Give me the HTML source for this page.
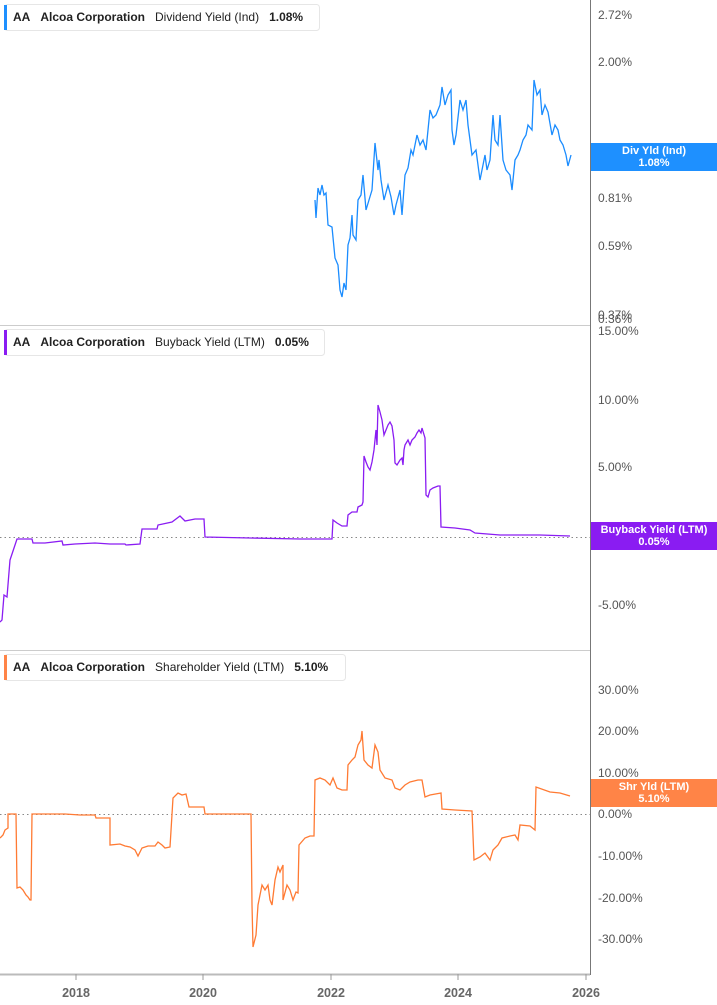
<!DOCTYPE html>
<html><head><meta charset="utf-8"><style>
html,body{margin:0;padding:0;background:#fff;}
svg{display:block;font-family:"Liberation Sans",Arial,sans-serif;}
.t{font-size:12px;fill:#555;}
.leg{font-size:12px;fill:#222;}
.b{font-weight:bold;}
</style></head><body>
<svg width="717" height="1005" viewBox="0 0 717 1005" xmlns="http://www.w3.org/2000/svg">
<rect width="717" height="1005" fill="#fff"/>
<line x1="0" y1="325.5" x2="590" y2="325.5" stroke="#ccc"/>
<line x1="0" y1="650.5" x2="590" y2="650.5" stroke="#ccc"/>
<line x1="590.5" y1="0" x2="590.5" y2="975" stroke="#777"/>
<line x1="0" y1="974.5" x2="590" y2="974.5" stroke="#bbb" stroke-width="2"/>
<g stroke="#999"><line x1="76" y1="974" x2="76" y2="980"/><line x1="203" y1="974" x2="203" y2="980"/><line x1="331" y1="974" x2="331" y2="980"/><line x1="458" y1="974" x2="458" y2="980"/><line x1="586" y1="974" x2="586" y2="980"/></g>
<g font-size="12.5" font-weight="bold" fill="#666" text-anchor="middle">
<text x="76" y="997">2018</text><text x="203" y="997">2020</text><text x="331" y="997">2022</text><text x="458" y="997">2024</text><text x="586" y="997">2026</text></g>

<line x1="0" y1="537.5" x2="590" y2="537.5" stroke="#888" stroke-dasharray="1.5,3"/>
<line x1="0" y1="814.5" x2="590" y2="814.5" stroke="#888" stroke-dasharray="1.5,3"/>

<g class="t">
<text x="598" y="19">2.72%</text><text x="598" y="66">2.00%</text>
<text x="598" y="170" opacity="0.5">1.00%</text>
<text x="598" y="202">0.81%</text><text x="598" y="250">0.59%</text>
<text x="598" y="319">0.37%</text><text x="598" y="323">0.36%</text>
<text x="598" y="335">15.00%</text><text x="598" y="404">10.00%</text><text x="598" y="471">5.00%</text>
<text x="598" y="541" opacity="0.5">0.00%</text>
<text x="598" y="609">-5.00%</text>
<text x="598" y="694">30.00%</text><text x="598" y="735">20.00%</text><text x="598" y="777">10.00%</text>
<text x="598" y="818">0.00%</text><text x="598" y="860">-10.00%</text><text x="598" y="902">-20.00%</text><text x="598" y="943">-30.00%</text>
</g>

<polyline fill="none" stroke="#1a8cff" stroke-width="1.3" points="315,200 316,218 318,188 320,195 322,185 324,195 326,193 328,225 332,227 335,258 338,265 340,290 342,297 344,283 346,290 348,245 350,238 352,215 353,235 356,240 358,200 361,195 363,175 366,210 369,200 372,190 375,143 378,170 379,160 381,180 384,200 388,185 391,197 394,215 396,205 400,190 402,215 405,175 408,168 411,150 413,155 417,135 420,145 423,140 426,150 430,110 433,118 436,115 440,105 442,87 445,105 448,95 451,90 452,130 454,145 456,135 460,100 463,110 466,100 468,125 472,155 476,150 480,180 483,165 485,155 487,170 490,160 493,115 495,140 498,145 500,115 503,160 506,170 510,175 512,190 515,160 518,155 520,150 523,140 526,135 528,125 532,130 534,80 537,95 540,90 542,115 545,105 548,112 552,135 555,125 558,130 560,140 563,145 566,155 568,166 571,155"/>

<polyline fill="none" stroke="#8a1cf2" stroke-width="1.3" points="0,622 2,620 4,595 7,597 10,560 17,539 32,539 33,543 45,543 62,541 63,545 75,544 95,543 110,544 125,544 126,545 140,544 142,529 157,529 158,525 172,522 180,516 185,521 195,519 204,519 205,537 250,538 300,539 320,539 332,539 333,520 337,523 342,526 347,526 348,515 352,512 357,512 358,507 362,505 363,502 364,456 366,462 368,467 370,470 372,462 374,450 376,430 377,445 378,405 380,412 382,420 384,435 386,430 388,425 390,422 392,426 394,440 395,463 397,465 400,460 402,458 403,465 404,450 405,445 408,440 410,445 412,440 415,437 417,433 419,430 421,433 422,428 425,438 426,495 428,497 430,490 433,488 438,486 440,486 441,527 455,528 470,530 475,533 500,535 540,535 570,536"/>

<polyline fill="none" stroke="#ff7a33" stroke-width="1.3" points="0,838 3,835 5,830 8,828 8,814 16,814 17,888 20,887 23,890 26,895 28,897 30,900 31,900 32,814 65,814 80,815 95,815 96,818 110,818 110,845 120,844 125,846 130,847 135,850 138,856 142,848 148,846 155,846 158,842 162,845 165,848 170,847 173,798 178,793 182,795 186,794 189,807 204,807 205,814 230,814 251,814 252,905 253,947 256,935 258,905 262,885 265,890 268,885 270,900 272,905 275,880 278,867 280,872 283,865 283,900 287,885 290,890 293,900 296,892 298,893 299,845 305,838 310,836 314,836 315,780 320,778 325,780 330,785 333,778 337,788 342,790 347,790 348,765 352,760 355,757 358,745 361,740 362,731 364,760 368,765 372,768 375,745 378,752 380,770 385,778 392,780 395,788 400,790 405,785 410,782 418,780 422,780 425,797 430,795 441,793 442,809 455,810 472,811 474,860 480,857 485,853 490,860 493,850 498,845 502,838 510,836 515,835 518,840 520,825 530,826 535,830 536,787 550,792 560,793 570,796"/>

<rect x="591" y="143" width="126" height="28" fill="#1e90ff"/>
<text x="654" y="154" font-size="11" font-weight="bold" fill="#fff" text-anchor="middle">Div Yld (Ind)</text>
<text x="654" y="166" font-size="11" font-weight="bold" fill="#fff" text-anchor="middle">1.08%</text>
<rect x="591" y="522" width="126" height="28" fill="#8a1cf2"/>
<text x="654" y="533" font-size="11" font-weight="bold" fill="#fff" text-anchor="middle">Buyback Yield (LTM)</text>
<text x="654" y="545" font-size="11" font-weight="bold" fill="#fff" text-anchor="middle">0.05%</text>
<rect x="591" y="779" width="126" height="28" fill="#ff8447"/>
<text x="654" y="790" font-size="11" font-weight="bold" fill="#fff" text-anchor="middle">Shr Yld (LTM)</text>
<text x="654" y="802" font-size="11" font-weight="bold" fill="#fff" text-anchor="middle">5.10%</text>

<rect x="4.5" y="4.5" width="315" height="26" rx="3" fill="#fff" stroke="#e6e6e6"/>
<rect x="4" y="5" width="3" height="25" fill="#1e90ff"/>
<text x="13" y="21" class="leg"><tspan class="b">AA</tspan><tspan class="b" dx="10">Alcoa Corporation</tspan><tspan dx="10">Dividend Yield (Ind)</tspan><tspan class="b" dx="10">1.08%</tspan></text>

<rect x="4.5" y="329.5" width="320" height="26" rx="3" fill="#fff" stroke="#e6e6e6"/>
<rect x="4" y="330" width="3" height="25" fill="#8a1cf2"/>
<text x="13" y="346" class="leg"><tspan class="b">AA</tspan><tspan class="b" dx="10">Alcoa Corporation</tspan><tspan dx="10">Buyback Yield (LTM)</tspan><tspan class="b" dx="10">0.05%</tspan></text>

<rect x="4.5" y="654.5" width="341" height="26" rx="3" fill="#fff" stroke="#e6e6e6"/>
<rect x="4" y="655" width="3" height="25" fill="#ff8447"/>
<text x="13" y="671" class="leg"><tspan class="b">AA</tspan><tspan class="b" dx="10">Alcoa Corporation</tspan><tspan dx="10">Shareholder Yield (LTM)</tspan><tspan class="b" dx="10">5.10%</tspan></text>
</svg>
</body></html>
